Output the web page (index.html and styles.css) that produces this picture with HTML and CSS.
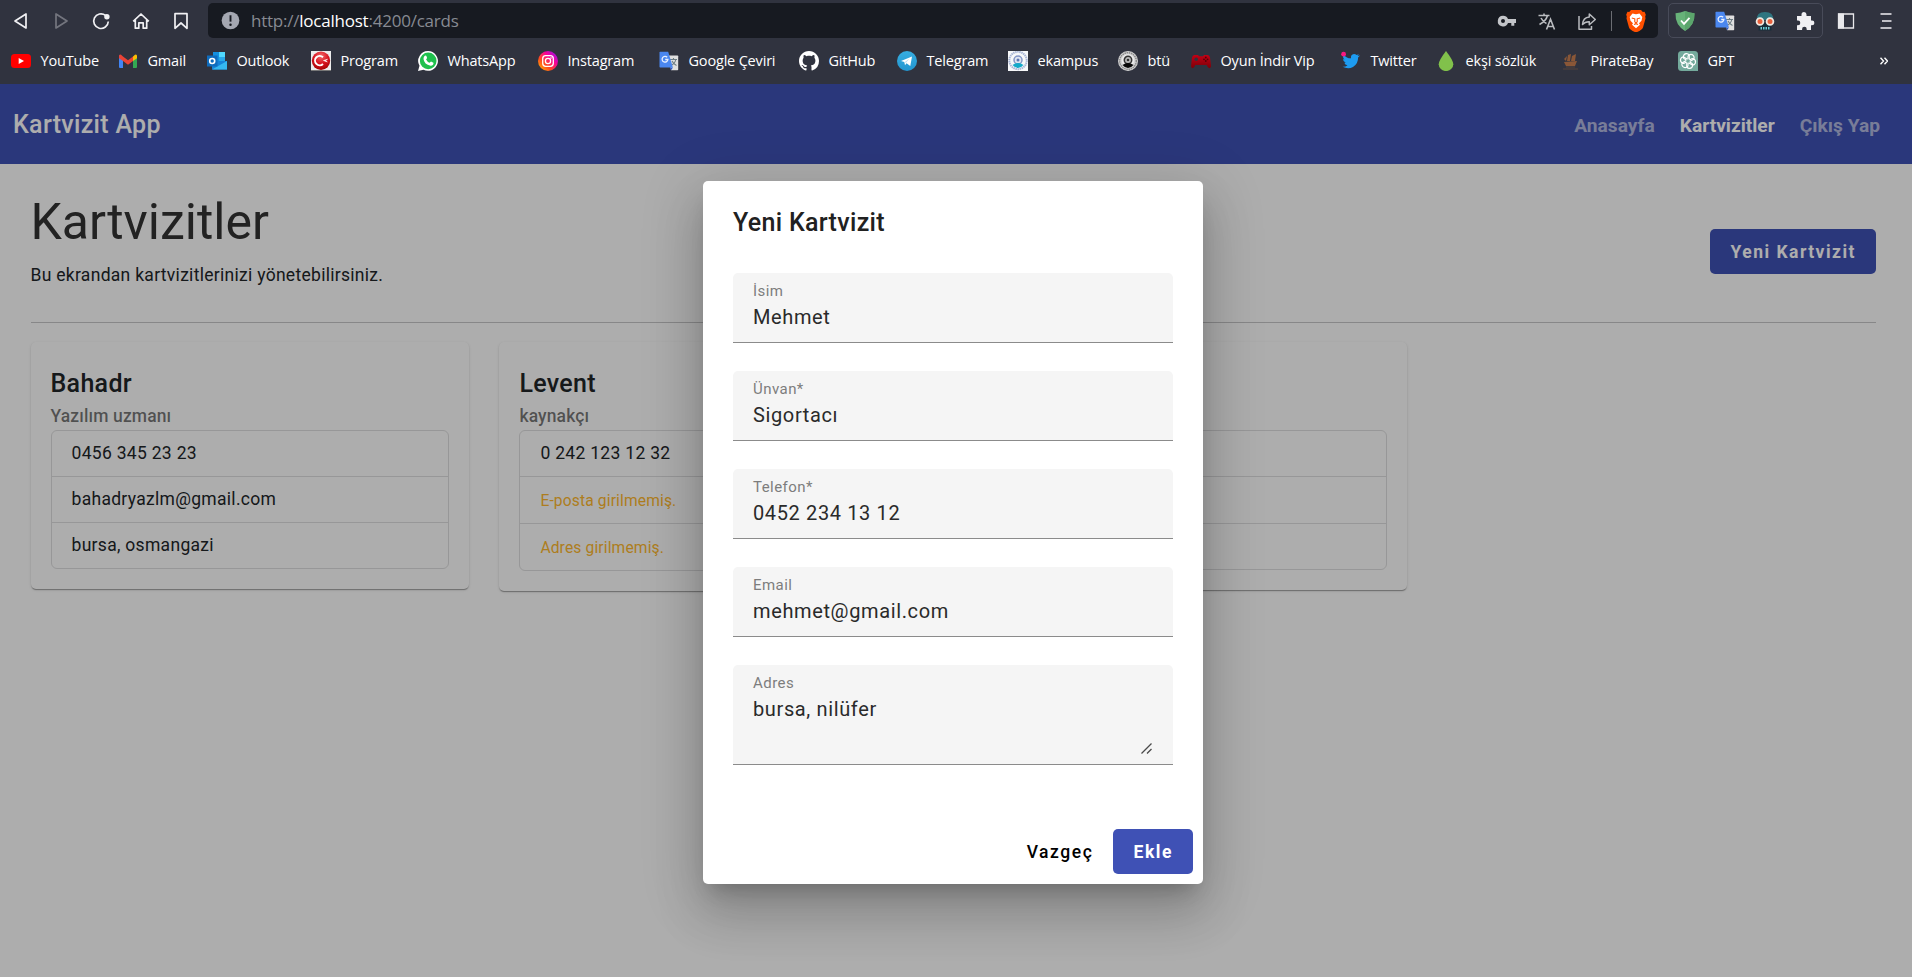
FILE: index.html
```html
<!DOCTYPE html>
<html lang="tr">
<head>
<meta charset="utf-8">
<title>Kartvizit App</title>
<link rel="stylesheet" href="styles.css">
</head>
<body>
<svg width="0" height="0" class="defs" aria-hidden="true">
  <defs>
    <linearGradient id="ig" x1="0" y1="1" x2="1" y2="0"><stop offset="0" stop-color="#ffc400"/><stop offset=".35" stop-color="#ff4b1f"/><stop offset=".65" stop-color="#f5009b"/><stop offset="1" stop-color="#7a18ff"/></linearGradient>
    <linearGradient id="tg" x1="0" y1="0" x2="0" y2="1"><stop offset="0" stop-color="#37aee2"/><stop offset="1" stop-color="#2296d0"/></linearGradient>
    <radialGradient id="rd" cx=".5" cy=".25" r=".8"><stop offset="0" stop-color="#f46a6a"/><stop offset=".5" stop-color="#d81420"/><stop offset="1" stop-color="#a00000"/></radialGradient>
    <linearGradient id="pad" x1="0" y1="0" x2="0" y2="1"><stop offset="0" stop-color="#c40014"/><stop offset="1" stop-color="#7c0008"/></linearGradient>
    <symbol id="gtr" viewBox="0 0 20 20">
      <path d="M9 4.500h9.500q.7 0 .7.700v13.300q0 .7-.7.700H12z" fill="#dfdfdf"/>
      <path d="M11 8.500h7M14.500 7v1.500M12 14.500q4-2 4.800-6M13 10q1.500 3 4.500 4.500" stroke="#6d7d84" stroke-width="1.100" fill="none"/>
      <path d="M11 16.500h3l-2 2.700z" fill="#2f56c5"/>
      <path d="M1.200.7h8l4.700 15.800H1.200Q.5 16.500.5 15.800V1.400Q.5.700 1.200.7z" fill="#4a87f0"/>
      <path d="M8.200 6.300A2.900 2.900 0 1 0 8.900 8.500H6.200" stroke="#e8f0ff" stroke-width="1.300" fill="none"/>
    </symbol>
  </defs>
</svg>

<header class="browser">
  <div class="toolbar">
    <div class="nav-buttons">
      <svg viewBox="0 0 20 20"><path d="M15 3v14L4 10z" class="ln"/></svg>
      <svg viewBox="0 0 20 20" class="dim"><path d="M5 3v14l11-7z" class="ln"/></svg>
      <svg viewBox="0 0 20 20"><path d="M14.500 4.400A7.300 7.300 0 1 0 17.300 10.500" class="ln"/><circle cx="15.900" cy="5.700" r="2.700" fill="#f1f1f4"/></svg>
      <svg viewBox="0 0 20 20"><path d="M2.200 10.300 10 3l7.800 7.300M4.300 9v8.200h3.500v-5.400h4.400v5.400h3.500V9" class="ln"/></svg>
      <svg viewBox="0 0 20 20"><path d="M4 2.700h12v14.600l-6-5.300-6 5.300z" class="ln"/></svg>
    </div>
    <div class="address">
      <svg class="warn" viewBox="0 0 20 20"><circle cx="10" cy="10" r="9.300" fill="#a4a7b1"/><path d="M10 4.500v6.700" stroke="#171a21" stroke-width="2"/><circle cx="10" cy="14.500" r="1.300" fill="#171a21"/></svg>
      <span class="url">http://<b>localhost</b>:4200/cards</span>
      <div class="address-icons">
        <svg viewBox="0 0 20 20"><path d="M6 4.700a5.300 5.300 0 1 0 5 7.300h3.300v2.700h3V12H19V8h-8a5.300 5.300 0 0 0-5-3.300zM6 8a2 2 0 1 1 0 4 2 2 0 0 1 0-4z" fill="#c3c5c9" fill-rule="evenodd"/></svg>
        <svg viewBox="0 0 20 20"><path d="M1.500 4.500h11M7 2.500v2M10.500 4.500Q9 10 2.500 13.500M4 7q2 4 5.500 5.500M9.500 18.500l4-10.300 4 10.300M10.800 15.500h5.400" stroke="#b9bbbf" stroke-width="1.600" fill="none"/></svg>
        <svg viewBox="0 0 20 20"><path d="M2 5v13.200h12.500V15M5.500 13.500Q6 6.500 12.300 6V3l6 5.500-6 5.200v-3Q8 10.500 5.500 13.500z" stroke="#b9bbbf" stroke-width="1.500" fill="none" stroke-linejoin="round"/></svg>
        <i class="divider"></i>
        <svg class="brave" viewBox="0 0 20 22"><path d="M5 0h10l1.800 2 1.700-.2 1.300 3-.6 1.700.3 2-2.500 9Q16 20 10 22.500 4 20 3 17.500L.5 8.500l.3-2L.2 4.800l1.300-3 1.700.2z" fill="#ff5000"/><path d="M6.500 3.500 10 4.200l3.500-.7 2.800 3.500-.8 3.700-2.500 2.600 1 1.500-4 3.400-4-3.400 1-1.500-2.500-2.600L3.700 7z" fill="#fff"/><path d="M5.800 8l3 .8v3L10 13l1.200-1.200v-3l3-.8M8 14.500l2-.8 2 .8" stroke="#ff5000" stroke-width="1.100" fill="none"/></svg>
      </div>
    </div>
    <div class="extensions">
      <svg viewBox="0 0 20 20"><path d="M10 0q4.500 2 9.500 2.300Q20 14 10 20 0 14 .5 2.300 5.500 2 10 0z" fill="#67b279"/><path d="M10 0q4.500 2 9.500 2.300Q20 14 10 20z" fill="#5ba56c"/><path d="m6 9.500 3 3.300 5.500-6" stroke="#fff" stroke-width="1.800" fill="none"/></svg>
      <svg><use href="#gtr"/></svg>
      <svg viewBox="0 0 20 20"><path d="M2 9Q1 1 10 1t8 8z" fill="#2f7580"/><path d="M3.500 12h13v7.500h-13z" fill="#182e3a"/><circle cx="5" cy="10.500" r="3.400" fill="#e8603c" stroke="#efe9e1" stroke-width="1.800"/><circle cx="15" cy="10.500" r="3.400" fill="#e8603c" stroke="#efe9e1" stroke-width="1.800"/><path d="M5.500 17.300h9" stroke="#6dd0d8" stroke-width="2.400" stroke-dasharray="1.500 1"/></svg>
      <svg viewBox="0 0 20 20"><path d="M2 5h4.500V3.500a2.500 2.500 0 0 1 5 0V5H16v4.500h1a2.400 2.400 0 0 1 0 4.800h-1V19h-4.300v-1a2.300 2.300 0 0 0-4.600 0v1H2v-4.800h1a2.300 2.300 0 0 0 0-4.600H2z" fill="#f0f0f3"/></svg>
    </div>
    <div class="menu-icons">
      <svg viewBox="0 0 20 20"><path d="M2.500 3h15v14h-15z" fill="none" stroke="#e9e9ec" stroke-width="1.300"/><path d="M2 2.500h6v15H2z" fill="#e9e9ec"/></svg>
      <svg viewBox="0 0 20 20"><path d="M4.500 3h11M6 10h9.500M4.500 17h11" stroke="#f0f0f3" stroke-width="1.600" fill="none"/></svg>
    </div>
  </div>
  <nav class="bookmarks">
    <a class="w1"><svg viewBox="0 0 20 20"><rect y="3" width="20" height="14" rx="3.500" fill="#f00"/><path d="M7.700 7v6l5.300-3z" fill="#fff"/></svg><span>YouTube</span></a>
    <a class="w2"><svg viewBox="0 0 20 20"><path d="M1 4v12q0 1 1 1h3V8z" fill="#4285f4"/><path d="M19 4v12q0 1-1 1h-3V8z" fill="#34a853"/><path d="M15 5.500 17 3.800q2-.8 2 1.500v2L15 10z" fill="#fbbc04"/><path d="M1 7.300v-2Q1 3 3 3.800L5 5.500 10 9.300l5-3.800V10l-5 3.800L5 10z" fill="#ea4335"/></svg><span>Gmail</span></a>
    <a class="w3"><svg viewBox="0 0 20 20"><path d="M6 1h12v9H6z" fill="#1490df"/><path d="M12 1h6v5h-6z" fill="#50d9ff"/><path d="M12 6h6v5h-6z" fill="#28a8ea"/><path d="M5 10h15v8.500H5z" fill="#1683d8"/><path d="m5 18.500 15-8.500v8.500z" fill="#35b8f1"/><path d="M0 4.500h10.500v11H0z" fill="#0f6cbd"/><circle cx="5.200" cy="10" r="2.500" fill="none" stroke="#fff" stroke-width="1.600"/></svg><span>Outlook</span></a>
    <a class="w4"><svg viewBox="0 0 20 20"><path d="M0 0h20v20H0z" fill="#ececec"/><path d="M0 19h20v1H0z" fill="#777"/><circle cx="10" cy="9.700" r="9.200" fill="url(#rd)"/><path d="M12 6.200A4.700 4.700 0 1 0 12 13" fill="none" stroke="#fff" stroke-width="2"/><path d="m12.500 9.500 4-1.200-2.200 1.300 2 1.300z" stroke="#fff" stroke-width=".6" fill="#fff"/></svg><span>Program</span></a>
    <a class="w5"><svg viewBox="0 0 20 20"><path d="M10.200 0A9.900 9.900 0 1 1 5.500 18.700L0 20l1.500-5.200A9.900 9.900 0 0 1 10.200 0z" fill="#fff"/><circle cx="10.200" cy="9.900" r="8.300" fill="#1fc04d"/><path d="M6.500 5q1.500-1 2 .3l.6 1.700-1 1.500q1.200 2.400 3.500 3.300l1.400-1.300 2.400 1.200q.5 2.600-2.800 3Q6.200 13.500 5.500 8q0-2 1-3z" fill="#fff"/></svg><span>WhatsApp</span></a>
    <a class="w6"><svg viewBox="0 0 20 20"><circle cx="10" cy="10" r="10" fill="url(#ig)"/><rect x="4.700" y="4.700" width="10.600" height="10.600" rx="3" fill="none" stroke="#fff" stroke-width="1.300"/><circle cx="10" cy="10" r="2.600" fill="none" stroke="#fff" stroke-width="1.300"/><circle cx="13" cy="7" r=".8" fill="#fff"/></svg><span>Instagram</span></a>
    <a class="w7"><svg><use href="#gtr"/></svg><span>Google Çeviri</span></a>
    <a class="w8"><svg viewBox="0 0 16 16"><path fill="#fff" d="M8 0C3.580 0 0 3.580 0 8c0 3.540 2.290 6.530 5.470 7.590.4.070.55-.17.550-.38 0-.19-.01-.82-.01-1.490-2.010.37-2.530-.49-2.690-.94-.09-.23-.48-.94-.82-1.130-.28-.15-.68-.52-.01-.53.630-.01 1.080.580 1.230.820.720 1.210 1.870.870 2.330.660.070-.52.280-.87.510-1.070-1.780-.2-3.640-.89-3.640-3.950 0-.87.310-1.590.820-2.150-.08-.2-.36-1.020.080-2.120 0 0 .67-.21 2.200.820.640-.18 1.320-.27 2-.27s1.360.090 2 .27c1.530-1.040 2.200-.82 2.200-.82.440 1.100.160 1.920.080 2.120.510.560.820 1.270.820 2.150 0 3.070-1.870 3.750-3.650 3.950.290.250.540.730.540 1.480 0 1.070-.01 1.930-.01 2.200 0 .21.150.460.550.380A8.010 8.010 0 0 0 16 8c0-4.420-3.580-8-8-8z"/></svg><span>GitHub</span></a>
    <a class="w9"><svg viewBox="0 0 20 20"><circle cx="10" cy="10" r="10" fill="url(#tg)"/><path d="M4 10 15 5.500 13.300 15 9.500 12.300 8 14.300 7.300 11z" fill="#fff"/><path d="m7.500 11.200 5-3.700-3.500 4.300" fill="#bcdff0"/></svg><span>Telegram</span></a>
    <a class="w10"><svg viewBox="0 0 20 20"><path d="M0 0h20v20H0z" fill="#f7f8fa"/><circle cx="10" cy="9.500" r="8.700" fill="none" stroke="#a9b6d6" stroke-width="2" stroke-dasharray="1.500 .6"/><circle cx="10" cy="9" r="4" fill="#dfe5f2" stroke="#8295c6" stroke-width="1.500"/><circle cx="10" cy="9" r="1.500" fill="#5f78b4"/><path d="M4.500 14q5.500-4 11 0-2.500 3-5.500 3t-5.500-3z" fill="#14a9c9"/></svg><span>ekampus</span></a>
    <a class="w11"><svg viewBox="0 0 20 20"><circle cx="10" cy="10" r="10" fill="#d5d5d5"/><circle cx="10" cy="10" r="8.300" fill="none" stroke="#8a8a8a" stroke-width="1.500" stroke-dasharray="1.500 .7"/><circle cx="10" cy="9.500" r="6.200" fill="#ececec"/><circle cx="10" cy="9" r="3.700" fill="#bbb" stroke="#333" stroke-width="1.500"/><circle cx="10" cy="9" r="1.300" fill="#333"/><path d="M4.500 14q5.500-4 11 0-2.500 3-5.500 3t-5.500-3z" fill="#080808"/></svg><span>btü</span></a>
    <a class="w12"><svg viewBox="0 0 20 20"><path d="M3.500 4H7l1 1.200h4L13 4h3.500q2 0 2.500 2.500l1 8.500q0 2-1.700 2.200-1.500 0-2.600-3.200H4.300Q3.200 17.200 1.700 17.200 0 17 0 15L1 6.500Q1.500 4 3.500 4z" fill="url(#pad)"/><circle cx="5.200" cy="8.300" r="1.800" fill="#30333f"/><g fill="#520008"><circle cx="14.800" cy="6.500" r=".9"/><circle cx="14.800" cy="10" r=".9"/><circle cx="13" cy="8.300" r=".9"/><circle cx="16.600" cy="8.300" r=".9"/></g></svg><span>Oyun İndir Vip</span></a>
    <a class="w13"><svg viewBox="0 0 20 20"><path d="M19 4.600l-1.900 2Q17.200 13 12 16q-5 2.500-10.500-.3 3 .2 5-1.500-2.500-.3-3.200-2.400h1.500Q2 10.800 2 8l1.500.5Q1.200 6.500 2.500 3.700 6 7.500 10 7.300 9.500 3.500 13 3q1.500 0 2.600 1l2.300-.8-1.400 1.900z" fill="#1d9bf0"/><circle cx="2.600" cy="3.200" r="2.400" fill="#f91880"/></svg><span>Twitter</span></a>
    <a class="w14"><svg viewBox="0 0 20 20"><path d="M10 0q7.300 9.500 7.300 13.200a7.200 6.800 0 0 1-14.600 0Q2.700 9.500 10 0z" fill="#81c14b"/></svg><span>ekşi sözlük</span></a>
    <a class="w15"><svg viewBox="0 0 20 20"><path d="M7 2l3 5M3 8l3-3-1 5zM7 4l3-1-1 7H6zM11 5l4-2-1 7h-4zM3 11l13-1-2 5H5z" fill="#8a5737"/><path d="M2 18h15M5 16h9" stroke="#57443d" stroke-width="1"/></svg><span>PirateBay</span></a>
    <a class="w16"><svg viewBox="0 0 20 20"><path d="M3.500 0h13Q20 0 20 3.500V20H3.500Q0 20 0 16.500v-13Q0 0 3.500 0z" fill="#74aa9c"/><g fill="none" stroke="#fff" stroke-width="1.150"><path id="petal" d="M10 8V5.700q0-1 .9-1.600 2.500-1.600 4.500.5 1.200 1.500.5 3.400L11.700 10.500"/><use href="#petal" transform="rotate(60 10 10)"/><use href="#petal" transform="rotate(120 10 10)"/><use href="#petal" transform="rotate(180 10 10)"/><use href="#petal" transform="rotate(240 10 10)"/><use href="#petal" transform="rotate(300 10 10)"/></g></svg><span>GPT</span></a>
    <svg class="more" viewBox="0 0 8 8"><path d="M.5.800 3.500 4l-3 3.200M4.500.800 7.500 4l-3 3.200" fill="none" stroke="#fff" stroke-width="1.400"/></svg>
  </nav>
</header>

<div class="app">
  <header class="navbar">
    <span class="brand">Kartvizit App</span>
    <nav class="links"><a>Anasayfa</a><a class="active">Kartvizitler</a><a>Çıkış Yap</a></nav>
  </header>
  <main class="page">
    <section class="page-head">
      <div>
        <h1>Kartvizitler</h1>
        <p>Bu ekrandan kartvizitlerinizi yönetebilirsiniz.</p>
      </div>
      <button class="btn primary">Yeni Kartvizit</button>
    </section>
    <section class="cards">
      <article class="card">
        <h2>Bahadr</h2>
        <h3>Yazılım uzmanı</h3>
        <ul><li>0456 345 23 23</li><li>bahadryazlm@gmail.com</li><li>bursa, osmangazi</li></ul>
      </article>
      <article class="card">
        <h2>Levent</h2>
        <h3>kaynakçı</h3>
        <ul><li>0 242 123 12 32</li><li class="missing">E-posta girilmemiş.</li><li class="missing">Adres girilmemiş.</li></ul>
      </article>
      <article class="card">
        <h2>&nbsp;</h2>
        <h3>&nbsp;</h3>
        <ul><li>&nbsp;</li><li class="missing">&nbsp;</li><li>&nbsp;</li></ul>
      </article>
    </section>
  </main>

  <div class="backdrop">
    <div class="dialog">
      <h2 class="dialog-title">Yeni Kartvizit</h2>
      <form class="fields">
        <div class="field"><label>İsim</label><span>Mehmet</span></div>
        <div class="field"><label>Ünvan*</label><span>Sigortacı</span></div>
        <div class="field"><label>Telefon*</label><span>0452 234 13 12</span></div>
        <div class="field"><label>Email</label><span>mehmet@gmail.com</span></div>
        <div class="field area"><label>Adres</label><span>bursa, nilüfer</span>
          <svg class="grip" viewBox="0 0 11 11"><path d="M.5 10.500 10.500.5M6 10.500 10.500 6" stroke="#4a4a4a" stroke-width="1.300"/></svg></div>
      </form>
      <div class="actions"><button class="btn">Vazgeç</button><button class="btn primary">Ekle</button></div>
    </div>
  </div>
</div>
</body>
</html>
```
FILE: styles.css
```css
* { box-sizing: border-box; }
body { margin: 0; width: 1912px; height: 977px; overflow: hidden; display: flex; flex-direction: column; font-family: Roboto, sans-serif; background: #fff; }
h1, h2, h3, p, ul { margin: 0; padding: 0; }
svg { display: block; flex: none; }
.defs { position: absolute; }

/* Browser chrome */
.browser { height: 84px; flex: none; background: #30333f; color: #fff; font-family: "Open Sans", "Noto Sans", sans-serif; }
.toolbar { height: 41px; padding: 0 16px 0 11px; display: flex; align-items: center; }
.nav-buttons { display: flex; gap: 20px; width: 197px; }
.nav-buttons svg, .address-icons svg, .extensions svg, .menu-icons svg { width: 20px; height: 20px; }
.ln { fill: none; stroke: #f1f1f4; stroke-width: 1.700; stroke-linejoin: round; }
.dim { opacity: .35; }
.address { width: 1450px; height: 35px; border-radius: 5px; background: #171a21; display: flex; align-items: center; padding: 0 12px 0 13px; }
.warn { width: 19px; height: 19px; }
.url { margin-left: 11px; font-size: 17px; letter-spacing: -.23px; color: #878a92; }
.url b { font-weight: 400; color: #fff; }
.address-icons { margin-left: auto; display: flex; align-items: center; gap: 20px; }
.address-icons .divider { width: 1px; height: 20px; background: #6b6d73; margin: 0 -6px 0 -6px; }
.address-icons .brave { height: 22px; }
.extensions { margin-left: 10px; width: 155px; height: 35px; border: 1px solid #484b59; border-radius: 5px; display: flex; align-items: center; gap: 20px; padding: 0 6px; }
.menu-icons { display: flex; gap: 20px; margin-left: auto; }
.bookmarks { display: flex; height: 40px; align-items: center; padding: 0 24px 0 11px; }
.bookmarks a { display: flex; align-items: center; gap: 9.500px; font-size: 14.500px; white-space: nowrap; letter-spacing: -.18px; }
.bookmarks a svg { width: 20px; height: 20px; }
.bookmarks a span { line-height: 20px; padding-bottom: 1px; }
.bookmarks .more { width: 8px; height: 8px; margin-left: auto; }
.w1 { width: 107px; } .w2 { width: 89px; } .w3 { width: 104px; } .w4 { width: 107px; }
.w5 { width: 120px; } .w6 { width: 121px; } .w7 { width: 140px; } .w8 { width: 98px; }
.w9 { width: 111px; } .w10 { width: 110px; } .w11 { width: 73px; } .w12 { width: 150px; }
.w13 { width: 95px; } .w14 { width: 125px; } .w15 { width: 117px; } .w16 { width: 80px; }

/* Application */
.app { position: relative; flex: 1; display: flex; flex-direction: column; color: #212529; }
.navbar { height: 80px; background: #3f51b5; color: #fff; display: flex; align-items: center; justify-content: space-between; padding: 0 32px 0 13px; }
.brand { font-size: 25px; font-weight: 500; letter-spacing: .0125em; }
.links { display: flex; gap: 25px; font-size: 19.200px; font-weight: 700; color: rgba(255, 255, 255, .6); padding-top: 3px; }
.links .active { color: #fff; }
.page { padding: 0 36px 0 30.500px; }
.page-head { height: 159px; border-bottom: 1px solid #c8c8c9; display: flex; justify-content: space-between; padding-top: 28px; }
h1 { font-size: 50px; line-height: 60px; font-weight: 400; color: #333; }
.page-head p { font-size: 17.500px; line-height: 25px; margin-top: 11px; letter-spacing: .29px; }
.page-head .btn { margin-top: 37px; letter-spacing: .085em; }
.btn { height: 45px; padding: 0 20px; border: 0; border-radius: 5px; background: transparent; color: #000; font: 500 17.500px Roboto, sans-serif; letter-spacing: .0893em; }
.btn.primary { background: #3f51b5; color: #fff; font-weight: 700; }
.cards { display: grid; grid-template-columns: repeat(4, 1fr); gap: 30px; align-items: start; padding-top: 19px; }
.card { border-radius: 5px; padding: 21px 20px 20px; background: #fff; box-shadow: 0 2px 1px -1px rgba(0, 0, 0, .2), 0 1px 1px rgba(0, 0, 0, .14), 0 1px 3px rgba(0, 0, 0, .12); }
.card h2 { font-size: 25px; line-height: 40px; padding-top: 1px; margin-bottom: -1px; font-weight: 500; letter-spacing: .0125em; }
.card h3 { font-size: 17.500px; line-height: 27px; font-weight: 500; letter-spacing: .0071em; color: rgba(0, 0, 0, .54); }
.card ul { list-style: none; border: 1px solid #dfdfe0; border-radius: 6px; font-size: 17.500px; letter-spacing: .3px; }
.card li { height: 46px; line-height: 45px; padding-left: 20px; border-bottom: 1px solid #dfdfe0; }
.card li:last-child { border-bottom: 0; height: 45px; }
.card .missing { height: 47px; line-height: 48px; font-size: 15.600px; letter-spacing: .14px; color: #ffb92e; }
.card .missing:last-child { height: 46px; }

/* Dialog */
.backdrop { position: absolute; inset: 0; background: rgba(0, 0, 0, .32); }
.dialog { position: absolute; left: 703px; top: 97px; width: 500px; height: 703px; background: #fff; border-radius: 5px; padding: 0 30px 10px; display: flex; flex-direction: column; color: #212121; box-shadow: 0 14px 19px -9px rgba(0, 0, 0, .2), 0 30px 48px 4px rgba(0, 0, 0, .14), 0 11px 58px 10px rgba(0, 0, 0, .12); }
.dialog-title { font-size: 25px; line-height: 40px; font-weight: 500; letter-spacing: .0125em; padding-top: 22px; height: 92px; }
.fields { display: flex; flex-direction: column; gap: 28px; }
.field { position: relative; height: 70px; padding: 8px 20px 0; border-bottom: 1px solid #8b8b8b; border-radius: 5px 5px 0 0; background: #f5f5f5; display: flex; flex-direction: column; }
.field label { font-size: 15px; line-height: 20px; letter-spacing: .03em; color: #7d7d7d; }
.field span { font-size: 20px; line-height: 30px; margin-top: 1px; letter-spacing: .03125em; color: #2a2a2a; }
.field.area { height: 100px; }
.grip { position: absolute; right: 21px; bottom: 10px; width: 11px; height: 11px; }
.actions { margin: auto -20px 0 0; display: flex; justify-content: flex-end; }
```
